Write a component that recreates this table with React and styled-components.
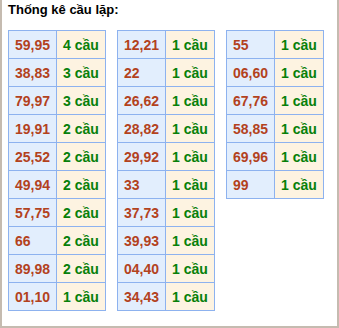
import React from "react";
import styled, { createGlobalStyle } from "styled-components";

const Global = createGlobalStyle`
  html, body { margin: 0; padding: 0; background: #ffffff; }
  body { font-family: Arial, "Liberation Sans", sans-serif; }
`;

const Box = styled.div`
  box-sizing: border-box;
  width: 339px;
  height: 328px;
  border-left: 2px solid #c5bbb0;
  border-right: 2px solid #c5bbb0;
  border-bottom: 2px solid #c5bbb0;
  padding: 2px 6px 0 6px;
  background: #fff;
`;

const Title = styled.div`
  font-family: Arial, "Liberation Sans", sans-serif;
  font-weight: bold;
  font-size: 13px;
  line-height: 16px;
  color: #000;
`;

const Tables = styled.div`
  display: flex;
  align-items: flex-start;
  gap: 11px;
  margin-top: 12px;
`;

const Grid = styled.div`
  display: grid;
  grid-template-columns: 48px 49px;
  border-left: 1px solid #8db2ef;
  border-top: 1px solid #8db2ef;
`;

const Cell = styled.div`
  box-sizing: border-box;
  height: 28px;
  display: flex;
  align-items: center;
  padding-left: 6px;
  border-right: 1px solid #8db2ef;
  border-bottom: 1px solid #8db2ef;
  font-family: Arial, "Liberation Sans", sans-serif;
  font-weight: bold;
  font-size: 14px;
  white-space: nowrap;
  background: ${(p) => (p.$kind === "num" ? "#e2eefd" : "#fdf3e1")};
  color: ${(p) => (p.$kind === "num" ? "#b3421d" : "#07800a")};
`;

const data = [
  [
    ["59,95", 4], ["38,83", 3], ["79,97", 3], ["19,91", 2], ["25,52", 2],
    ["49,94", 2], ["57,75", 2], ["66", 2], ["89,98", 2], ["01,10", 1],
  ],
  [
    ["12,21", 1], ["22", 1], ["26,62", 1], ["28,82", 1], ["29,92", 1],
    ["33", 1], ["37,73", 1], ["39,93", 1], ["04,40", 1], ["34,43", 1],
  ],
  [
    ["55", 1], ["06,60", 1], ["67,76", 1], ["58,85", 1], ["69,96", 1], ["99", 1],
  ],
];

export default function App() {
  return (
    <>
      <Global />
      <Box>
        <Title>Thống kê cầu lặp:</Title>
        <Tables>
          {data.map((col, i) => (
            <Grid key={i}>
              {col.map(([n, c]) => (
                <React.Fragment key={n}>
                  <Cell $kind="num">{n}</Cell>
                  <Cell $kind="count">{c} cầu</Cell>
                </React.Fragment>
              ))}
            </Grid>
          ))}
        </Tables>
      </Box>
    </>
  );
}
